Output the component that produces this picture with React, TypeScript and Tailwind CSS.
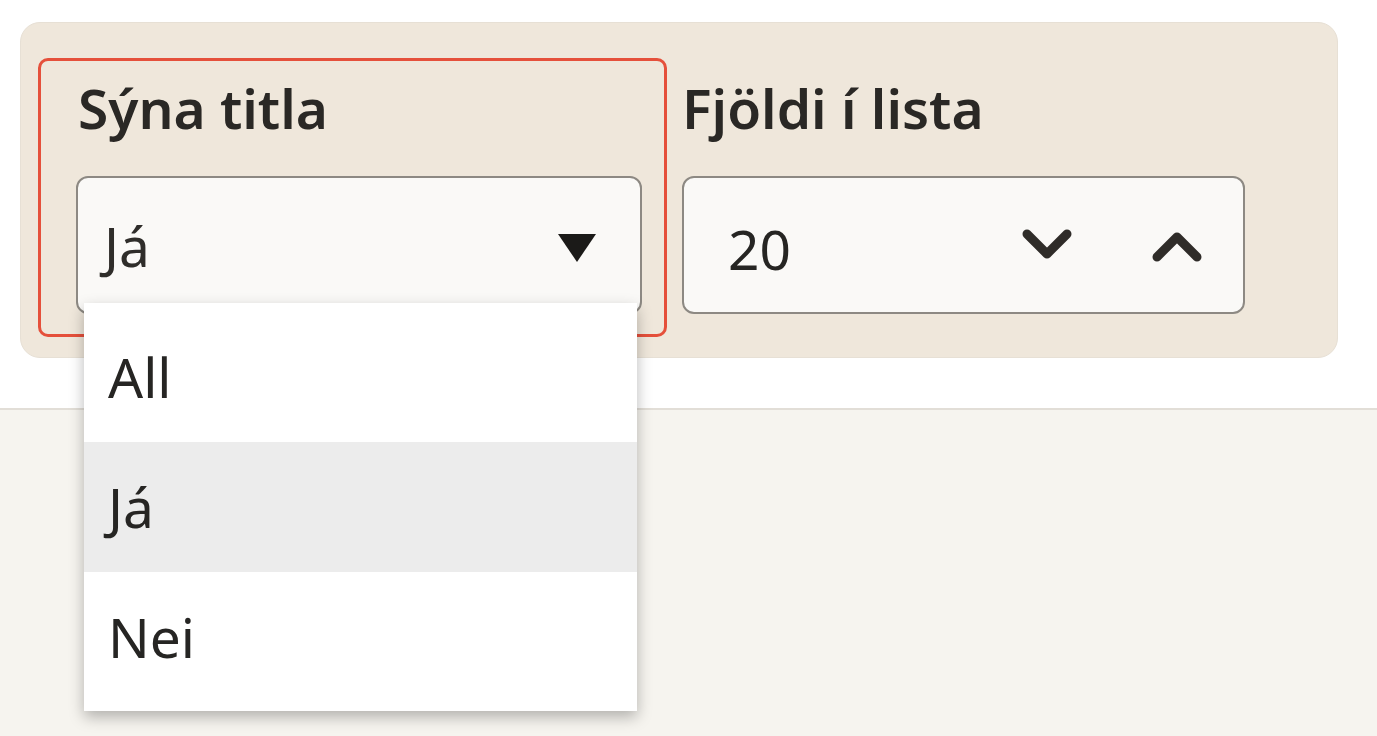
import React from 'react'

const font = { fontFamily: '"Noto Sans", "Open Sans", sans-serif' }

function Triangle() {
  return (
    <svg width="40" height="30" viewBox="0 0 40 30" className="shrink-0 mt-[6px]">
      <path d="M1 1 H39 L20 29 Z" fill="#1b1a18" />
    </svg>
  )
}

function Chevron({ up }: { up?: boolean }) {
  return (
    <svg width="52" height="36" viewBox="0 0 52 36" className="shrink-0">
      <path
        d={up ? 'M6 30 L26 10 L46 30' : 'M6 7 L26 27 L46 7'}
        fill="none"
        stroke="#2f2c29"
        strokeWidth="9"
        strokeLinecap="round"
        strokeLinejoin="round"
      />
    </svg>
  )
}

export default function App() {
  const options = ['All', 'Já', 'Nei']

  return (
    <div className="w-[1377px] h-[736px] overflow-hidden flex flex-col bg-white" style={font}>
      {/* top area */}
      <div className="h-[408px] shrink-0 bg-white pt-[22px] pl-[20px]">
        <div className="w-[1318px] h-[336px] rounded-[20px] bg-[#efe7db] border border-[#e7e0d5] flex items-start gap-[15px] pt-[35px] pl-[17px]">
          {/* focused column */}
          <div className="relative w-[629px] h-[279px] border-[3px] border-[#e5503b] rounded-[10px] pt-[15px] pl-[35px]">
            <div className="text-[55px] leading-[64px] font-semibold text-[#2a2825] pl-[2px]">Sýna titla</div>
            <div className="relative mt-[36px] w-[566px] h-[138px] rounded-[12px] border-2 border-[#8d8983] bg-[#faf9f7] flex items-center justify-between pl-[26px] pr-[43px]">
              <span className="text-[55px] leading-none text-[#2f2d2a] font-normal">Já</span>
              <Triangle />

              {/* dropdown list */}
              <div className="absolute left-[6px] top-[125px] w-[553px] bg-white py-[9px] shadow-[0_6px_14px_rgba(0,0,0,0.28)] z-10">
                {options.map(o => (
                  <div
                    key={o}
                    className={`h-[130px] flex items-center pl-[24px] text-[55px] text-[#262523] ${o === 'Já' ? 'bg-[#ececec]' : 'bg-white'}`}
                  >
                    {o}
                  </div>
                ))}
              </div>
            </div>
          </div>

          {/* number column */}
          <div className="pt-[18px]">
            <div className="text-[55px] leading-[64px] font-semibold text-[#2a2825]">Fjöldi í lista</div>
            <div className="mt-[36px] w-[563px] h-[138px] rounded-[12px] border-2 border-[#8d8983] bg-[#faf9f7] flex items-center pl-[44px] pr-[40px]">
              <span className="text-[55px] leading-none text-[#262523] flex-1 pt-[6px]">20</span>
              <div className="flex items-center gap-[78px]">
                <Chevron />
                <Chevron up />
              </div>
            </div>
          </div>
        </div>
      </div>

      {/* divider + lower area */}
      <div className="h-[2px] shrink-0 bg-[#e2ded7]" />
      <div className="flex-1 bg-[#f6f4ef]" />
    </div>
  )
}
